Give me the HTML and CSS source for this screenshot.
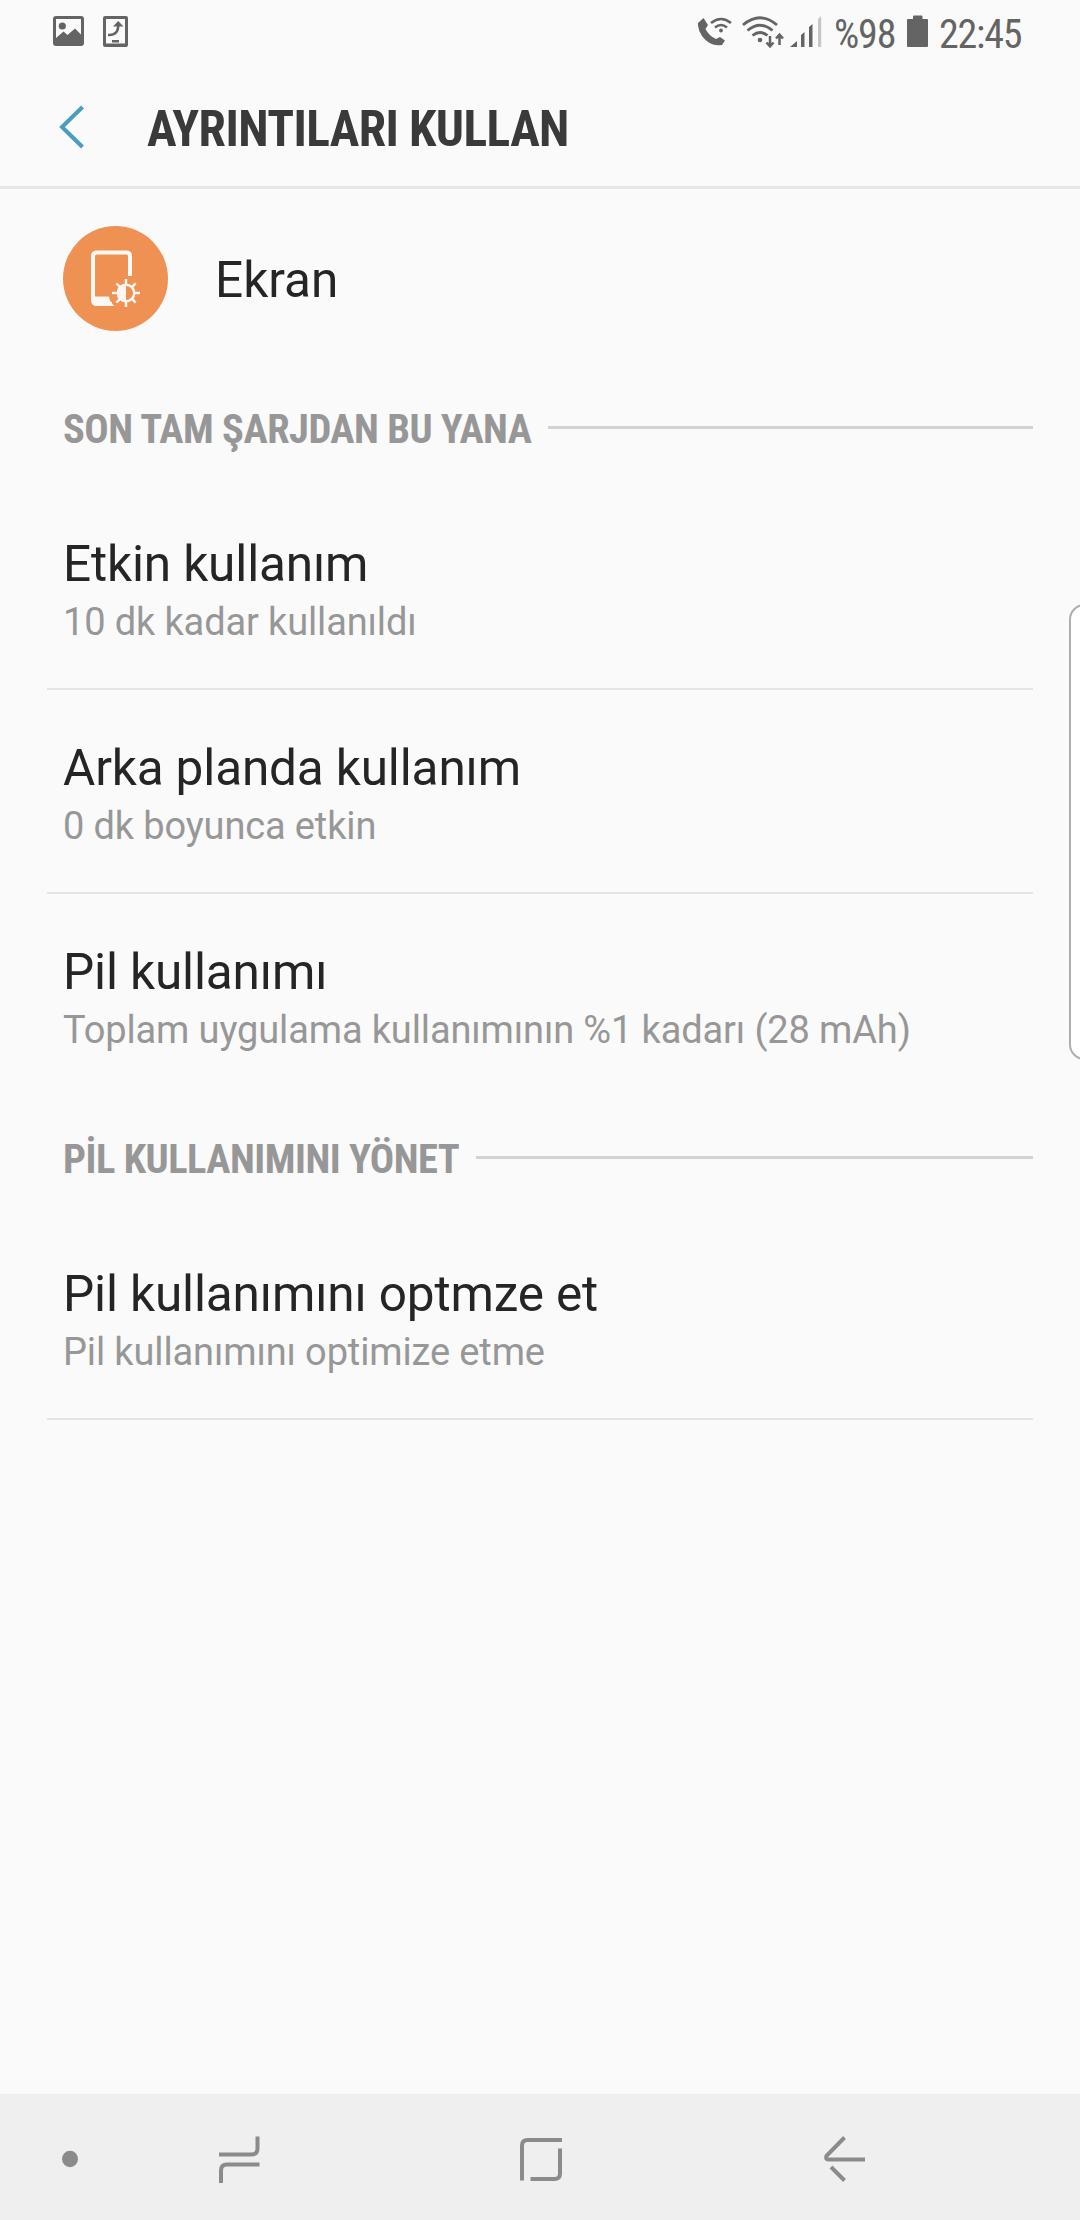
FILE: index.html
```html
<!DOCTYPE html>
<html lang="tr">
<head>
    <meta charset="UTF-8"/>
    <meta name="viewport" content="width=device-width, initial-scale=1.0"/>
    <title>Ayrıntıları kullan</title>
    <link rel="stylesheet" href="styles.css">
</head>
<body>
<div class="status-bar">
    <svg class="icon-picture" width="31" height="30" viewBox="0 0 31 30">
        <path fill-rule="evenodd" d="M3 0H28Q31 0 31 3V27Q31 30 28 30H3Q0 30 0 27V3Q0 0 3 0ZM3 3V22L10.500 15.500L14.500 19L22 12.500L28 18.500V3Z"/>
        <circle cx="9.300" cy="10" r="3.600"/>
    </svg>
    <svg class="icon-share" width="25" height="31" viewBox="0 0 25 31">
        <path fill-rule="evenodd" d="M2 0H23Q25 0 25 2V29Q25 31 23 31H2Q0 31 0 29V2Q0 0 2 0ZM3 3V27.500H22V3Z"/>
        <path d="M5 19C12 19.500 15.500 16 15.200 8" fill="none" stroke="#646464" stroke-width="2.600"/>
        <path d="M10 10.500L15.200 5L20.500 10.500ZM9 24H16V26.500H9Z"/>
    </svg>
    <div class="status-right">
        <svg class="icon-call" width="34" height="32" viewBox="0 0 34 32">
            <path d="M0 7L5.500 2L10 9L7.500 13Q11 20 18 23L22 21L27 24.500L24 29Q12 31 4 20Q-.5 13 0 7Z"/>
            <g fill="none" stroke="#646464" stroke-width="2.600">
                <path d="M13 7Q23 -1 33 7M17 11.500Q23 6.500 29 11.500"/>
            </g>
            <circle cx="23" cy="14.500" r="1.900"/>
        </svg>
        <svg class="icon-wifi" width="43" height="33" viewBox="0 0 43 33">
            <g fill="none" stroke="#646464" stroke-width="2.800">
                <path d="M1 9Q18 -5.500 35 9M5.500 14.500Q18 4 30.500 14.500M10.500 19.500Q18 13.500 25.500 19.500"/>
                <path d="M28 20V30M24.500 26.500L28 30.300L31.500 26.500M37.500 29V19M34 22.500L37.500 18.700L41 22.500" stroke-width="2.500"/>
            </g>
            <circle cx="18" cy="24" r="2.300"/>
        </svg>
        <svg class="icon-signal" width="32" height="32" viewBox="0 0 32 32">
            <path d="M0 31L7 25V31ZM11 19L14.500 16V31H11ZM19 11L22.500 8V31H19Z"/>
            <path d="M28 3L31.200 0V31H28Z" fill="#c6c6c6"/>
        </svg>
        <span class="status-text battery-level">%98</span>
        <svg class="icon-battery" width="21" height="33" viewBox="0 0 21 33">
            <path d="M1 4H6V1.500Q6 .5 7 .5H14.500Q15.500 .5 15.500 1.500V4H20Q21 4 21 5V31Q21 32 20 32H1Q0 32 0 31V5Q0 4 1 4Z"/>
        </svg>
        <span class="status-text clock">22:45</span>
    </div>
</div>

<header class="app-bar">
    <svg class="back" width="26" height="44" viewBox="0 0 26 44">
        <path d="M23.500 2L3 22L23.500 42" fill="none" stroke="#4a9dbd" stroke-width="4"/>
    </svg>
    <h1>AYRINTILARI KULLAN</h1>
</header>

<main>
    <div class="app-entry">
        <div class="app-icon">
            <svg width="105" height="105" viewBox="0 0 105 105">
                <path d="M67 50V30Q67 26.500 63.500 26.500H34Q30 26.500 30 30V74Q30 78 34 78H49" fill="none" stroke="#fdf8f4" stroke-width="4"/>
                <path d="M29 70.500H46Q46.500 76 51.500 80H34Q29 80 29 75Z" fill="#fdf8f4"/>
                <g fill="none" stroke="#fdf8f4" stroke-width="2.400">
                    <circle cx="63" cy="67" r="8.300"/>
                    <path d="M63 59V53M63 75V81M55 67H49M71 67H77M57.400 61.400L53.300 57.300M68.600 61.400L72.700 57.300M57.400 72.600L53.300 76.700M68.600 72.600L72.700 76.700"/>
                </g>
                <path d="M63 59A8 8 0 0 0 63 75Z" fill="#fdf8f4"/>
            </svg>
        </div>
        <span class="app-name">Ekran</span>
    </div>

    <section>
        <h2><span>SON TAM ŞARJDAN BU YANA</span></h2>
        <div class="row">
            <div class="row-title">Etkin kullanım</div>
            <div class="row-summary">10 dk kadar kullanıldı</div>
        </div>
        <div class="row">
            <div class="row-title">Arka planda kullanım</div>
            <div class="row-summary">0 dk boyunca etkin</div>
        </div>
        <div class="row no-divider">
            <div class="row-title">Pil kullanımı</div>
            <div class="row-summary">Toplam uygulama kullanımının %1 kadarı (28 mAh)</div>
        </div>
    </section>

    <section>
        <h2><span>PİL KULLANIMINI YÖNET</span></h2>
        <div class="row">
            <div class="row-title">Pil kullanımını optmze et</div>
            <div class="row-summary">Pil kullanımını optimize etme</div>
        </div>
    </section>
</main>

<div class="edge-handle"></div>

<nav class="nav-bar">
    <svg width="34" height="46" viewBox="0 0 34 46"><ellipse cx="16" cy="23" rx="8" ry="8.200" fill="#8b8b8b"/></svg>
    <div class="nav-button">
        <svg width="42" height="48" viewBox="0 0 42 48">
            <path d="M1 19.500H33.500Q39.500 19.500 39.500 13.500V1.500M41.500 29.500H9Q3 29.500 3 35.500V48"/>
        </svg>
    </div>
    <div class="nav-button">
        <svg width="44" height="46" viewBox="0 0 44 46">
            <path d="M3 44.500V9.500Q3 4 8.500 4H43M41 12.500V37.500Q41 43 35.500 43H11.500"/>
        </svg>
    </div>
    <div class="nav-button">
        <svg width="46" height="48" viewBox="0 0 46 48">
            <path d="M24.500 2.500L6.500 20.800Q5 24.500 8.500 24.500H45M11 32L24.500 45.500"/>
        </svg>
    </div>
</nav>
</body>
</html>
```

FILE: styles.css
```css
:root {
    --bg: #fafafa;
    --text: #252525;
    --muted: #979797;
    --status: #646464;
    --divider: #e4e4e4;
}

* {
    box-sizing: border-box;
}

body {
    margin: 0;
    height: 2220px;
    background-color: var(--bg);
    color: var(--text);
    font-family: Roboto, "Noto Sans", sans-serif;
    display: flex;
    flex-direction: column;
    position: relative;
    overflow: hidden;
}

svg {
    display: block;
    flex-shrink: 0;
}

h1, h2, .status-text {
    font-family: "Roboto Condensed", Roboto, sans-serif;
    font-stretch: 75%;
    white-space: nowrap;
}

/* status bar */
.status-bar {
    height: 64px;
    display: flex;
    align-items: flex-start;
    padding: 16px 56px 0 53px;
    fill: var(--status);
}

.icon-share {
    margin-left: 19px;
}

.status-right {
    display: flex;
    align-items: flex-start;
    margin-left: auto;
    width: 327px;
    padding-left: 1px;
}

.icon-wifi {
    margin-left: 10px;
}

.icon-signal {
    margin-left: 5px;
}

.status-text {
    font-size: 40px;
    line-height: 37px;
    letter-spacing: -1.2px;
    color: var(--status);
}

.battery-level {
    width: 61px;
    margin-left: 12px;
}

.icon-battery {
    margin: -1px 11px 0 12px;
}

/* header */
.app-bar {
    height: 125px;
    display: flex;
    align-items: center;
    padding: 3px 0 0 59px;
    border-bottom: 3px solid #e6e6e6;
}

h1 {
    margin: 4px 0 0 62px;
    font-size: 49.5px;
    line-height: 60px;
    font-weight: 700;
    letter-spacing: -0.6px;
    color: #3a3a3a;
}

main {
    flex-grow: 1;
}

.app-entry {
    display: flex;
    align-items: center;
    height: 191px;
    padding: 0 0 12px 63px;
}

.app-icon {
    width: 105px;
    height: 105px;
    border-radius: 50%;
    background-color: #ef9153;
}

.app-name {
    margin-left: 47px;
    padding-top: 3px;
    font-size: 49.5px;
}

/* preference list */
section {
    padding: 0 47px;
}

section + section {
    margin-top: 12px;
}

h2 {
    display: flex;
    align-items: center;
    gap: 17px;
    height: 106px;
    margin: 0;
    padding: 0 0 11px 16px;
    font-size: 40.5px;
    font-weight: 700;
    letter-spacing: -0.5px;
    color: var(--muted);
}

h2 span {
    padding-top: 3px;
}

h2::after {
    content: "";
    flex-grow: 1;
    height: 3px;
    background-color: #d2d2d2;
}

.row {
    height: 204px;
    padding: 48px 0 0 16px;
    border-bottom: 2px solid var(--divider);
}

.row.no-divider {
    border-bottom: none;
}

.row-title {
    font-size: 49.5px;
    line-height: 60px;
    letter-spacing: -0.15px;
}

.row-summary {
    padding-top: 1px;
    font-size: 38px;
    line-height: 54px;
    letter-spacing: -0.13px;
    color: var(--muted);
}

.edge-handle {
    position: absolute;
    top: 604px;
    right: -20px;
    width: 31px;
    height: 456px;
    background-color: #fff;
    border: 2px solid #aeaeae;
    border-radius: 18px;
}

/* navigation bar */
.nav-bar {
    display: flex;
    align-items: center;
    height: 126px;
    padding: 3px 0 0 54px;
    background-color: #efefef;
}

.nav-button {
    width: 302px;
    display: flex;
    justify-content: center;
    fill: none;
    stroke: #8b8b8b;
    stroke-width: 4;
}
```
